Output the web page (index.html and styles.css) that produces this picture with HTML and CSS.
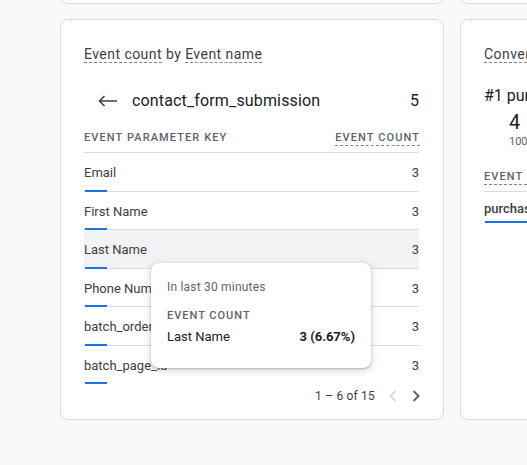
FILE: index.html
```html
<!DOCTYPE html>
<html>
<head>
<meta charset="utf-8">
<link rel="stylesheet" href="styles.css">
</head>
<body>
<div class="page">
  <div class="top-row">
    <div class="stub"></div>
    <div class="stub"></div>
  </div>
  <div class="cards">
    <div class="card main">
      <div class="title"><span class="dash">Event count</span> by <span class="dash">Event name</span></div>
      <div class="drill">
        <svg class="back" width="20" height="12" viewBox="0 0 20 12"><path d="M1.5 6H19M6.5 1L1.5 6l5 5" fill="none" stroke="#3c4043" stroke-width="1.6"/></svg>
        <span class="drill-name">contact_form_submission</span>
        <span class="drill-count">5</span>
      </div>
      <div class="table">
        <div class="thead">
          <span>Event parameter key</span>
          <span class="dash-h">Event count</span>
        </div>
        <div class="row"><div class="label"><span>Email</span><i class="bar"></i></div><span class="num">3</span></div>
        <div class="row"><div class="label"><span>First Name</span><i class="bar"></i></div><span class="num">3</span></div>
        <div class="row hover"><div class="label"><span>Last Name</span><i class="bar"></i></div><span class="num">3</span></div>
        <div class="row"><div class="label"><span>Phone Number</span><i class="bar"></i></div><span class="num">3</span></div>
        <div class="row"><div class="label"><span>batch_ordering_id</span><i class="bar"></i></div><span class="num">3</span></div>
        <div class="row last"><div class="label"><span>batch_page_id</span><i class="bar"></i></div><span class="num">3</span></div>
      </div>
      <div class="pager">
        <span class="range">1 – 6 of 15</span>
        <svg class="chev" width="10" height="12" viewBox="0 0 10 12"><path d="M7.5 1L2.5 6l5 5" fill="none" stroke="#dadce0" stroke-width="2"/></svg>
        <svg class="chev" width="10" height="12" viewBox="0 0 10 12"><path d="M2.5 1l5 5-5 5" fill="none" stroke="#5f6368" stroke-width="2"/></svg>
      </div>
      <div class="tooltip">
        <div class="tt-time">In last 30 minutes</div>
        <div class="tt-head">Event count</div>
        <div class="tt-row"><span>Last Name</span><b>3 (6.67%)</b></div>
      </div>
    </div>
    <div class="card side">
      <div class="title"><span class="dash">Conversions by Event name</span></div>
      <div class="rank">#1 purchase</div>
      <div class="metric">
        <div class="big">4</div>
        <div class="pct">100%</div>
      </div>
      <div class="thead side-head">
        <span class="dash-h">Event name</span>
      </div>
      <div class="row side-row"><div class="label"><span class="strong">purchase</span><i class="bar full"></i></div></div>
    </div>
  </div>
</div>
</body>
</html>
```

FILE: styles.css
```css
html, body {
  margin: 0;
  padding: 0;
  background: #f8f9fa;
  overflow: hidden;
  font-family: Roboto, "Noto Sans", Arial, sans-serif;
  color: #3c4043;
}

.page {
  width: 527px;
  height: 465px;
  overflow: hidden;
  padding: 1px 0 0 60px;
  box-sizing: border-box;
}

.top-row {
  display: flex;
  gap: 16px;
  height: 20px;
  margin-top: -17px;
}

.stub {
  flex: 0 0 384px;
  height: 20px;
  box-sizing: border-box;
  background: #fff;
  border: 1px solid #dadce0;
  border-radius: 8px;
}

.cards {
  display: flex;
  gap: 16px;
  margin-top: 15px;
}

.card {
  position: relative;
  flex: 0 0 384px;
  height: 401px;
  box-sizing: border-box;
  background: #fff;
  border: 1px solid #dadce0;
  border-radius: 8px;
  padding: 24px 24px 0 23px;
}

.title {
  font-size: 14px;
  line-height: 20px;
  letter-spacing: 0.45px;
  color: #3c4043;
  white-space: nowrap;
}

.dash {
  border-bottom: 1px dashed #80868b;
}

.drill {
  display: flex;
  align-items: center;
  margin-top: 25px;
  height: 24px;
  color: #202124;
}

.back {
  margin-left: 14px;
  margin-right: 14px;
}

.drill-name {
  flex: 1;
  font-size: 16px;
  line-height: 24px;
  letter-spacing: 0.15px;
}

.drill-count {
  font-size: 16px;
  line-height: 24px;
}

.table {
  margin-top: 17px;
}

.thead {
  display: flex;
  justify-content: space-between;
  align-items: flex-start;
  font-size: 11px;
  line-height: 16px;
  letter-spacing: 1.1px;
  text-transform: uppercase;
  color: #5f6368;
  font-weight: 500;
  padding-bottom: 6px;
  border-bottom: 1px solid #dadce0;
}

.dash-h {
  display: inline-block;
  line-height: 15px;
  border-bottom: 1px dashed #80868b;
  margin-right: -1px;
}

.row {
  display: flex;
  justify-content: space-between;
  align-items: flex-start;
  padding-top: 12px;
  border-bottom: 1px solid #dadce0;
  font-size: 13px;
  line-height: 16px;
  color: #3c4043;
}

.row.last {
  border-bottom: none;
  padding-bottom: 1px;
}

.row.hover {
  background: #f1f3f4;
}

.label {
  display: flex;
  flex-direction: column;
  align-items: flex-start;
  white-space: nowrap;
}

.bar {
  display: block;
  width: 22px;
  height: 2px;
  margin: 8.5px 0 -1px 1px;
  background: #1a73e8;
}

.bar.full {
  width: 100px;
}

.num {
  line-height: 16px;
}

.pager {
  display: flex;
  justify-content: flex-end;
  align-items: center;
  margin-top: 4px;
  height: 16px;
  font-size: 12px;
  letter-spacing: 0.2px;
  color: #3c4043;
}

.range {
  margin-right: 13px;
}

.chev + .chev {
  margin-left: 13px;
}

.chev:last-child {
  margin-right: -2px;
}

.tooltip {
  position: absolute;
  left: 90px;
  top: 243px;
  width: 220px;
  height: 105px;
  box-sizing: border-box;
  background: #fff;
  border-radius: 8px;
  box-shadow: 0 1px 2px rgba(60, 64, 67, 0.3), 0 2px 6px 2px rgba(60, 64, 67, 0.15);
  padding: 16px 16px 0 16px;
}

.tt-time {
  font-size: 12px;
  line-height: 16px;
  letter-spacing: 0.2px;
  color: #5f6368;
}

.tt-head {
  margin-top: 13px;
  font-size: 11px;
  line-height: 16px;
  letter-spacing: 1px;
  text-transform: uppercase;
  color: #5f6368;
  font-weight: 500;
}

.tt-row {
  display: flex;
  justify-content: space-between;
  margin-top: 3px;
  font-size: 13px;
  line-height: 20px;
  color: #202124;
}

.tt-row b {
  font-weight: 700;
}

.rank {
  margin-top: 20px;
  font-size: 16px;
  line-height: 24px;
  color: #202124;
  white-space: nowrap;
}

.metric {
  margin-left: 25px;
  margin-top: 2px;
}

.big {
  font-size: 20px;
  line-height: 24px;
  color: #202124;
}

.pct {
  font-size: 11px;
  line-height: 16px;
  color: #5f6368;
}

.side-head {
  margin-top: 19px;
  white-space: nowrap;
}

.side-row {
  border-bottom: none;
  padding-top: 9px;
}

.side-row .bar {
  margin-top: 4px;
}

.strong {
  font-weight: 500;
}
```
